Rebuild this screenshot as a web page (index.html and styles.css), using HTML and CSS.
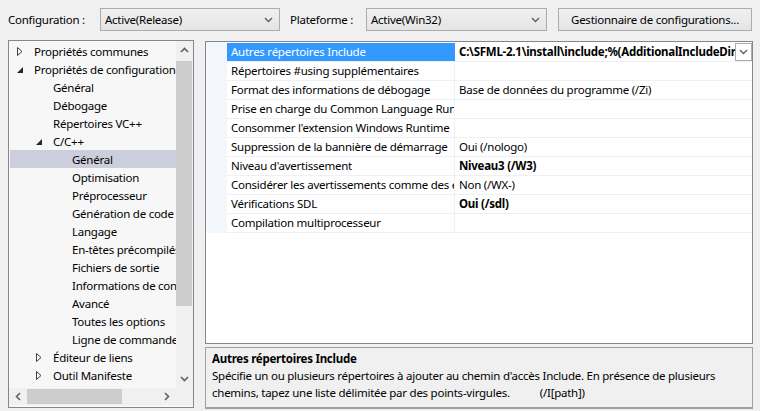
FILE: index.html
```html
<!DOCTYPE html>
<html lang="fr">
<head>
<meta charset="utf-8">
<link rel="stylesheet" href="styles.css">
</head>
<body>
<div class="toolbar">
  <span class="lbl lbl-config">Configuration :</span>
  <div class="combo combo-config"><span>Active(Release)</span><svg class="chev" width="9" height="6" viewBox="0 0 9 6"><path d="M1 1 L4.5 4.5 L8 1" fill="none" stroke="#606060" stroke-width="1.4"/></svg></div>
  <span class="lbl lbl-plat">Plateforme :</span>
  <div class="combo combo-plat"><span>Active(Win32)</span><svg class="chev" width="9" height="6" viewBox="0 0 9 6"><path d="M1 1 L4.5 4.5 L8 1" fill="none" stroke="#606060" stroke-width="1.4"/></svg></div>
  <button class="btn">Gestionnaire de configurations...</button>
</div>
<div class="main">
  <div class="tree">
    <div class="tree-content">
      <div class="node l0"><svg class="tw" width="8" height="9" viewBox="0 0 8 9"><path d="M1.5 0.5 L6 4.5 L1.5 8.5 Z" fill="none" stroke="#404040" stroke-width="1"/></svg>Propriétés communes</div>
      <div class="node l0"><svg class="tw" width="8" height="9" viewBox="0 0 8 9"><path d="M7 2 L7 8 L1 8 Z" fill="#262626"/></svg>Propriétés de configuration</div>
      <div class="node l1">Général</div>
      <div class="node l1">Débogage</div>
      <div class="node l1">Répertoires VC++</div>
      <div class="node l1"><svg class="tw" width="8" height="9" viewBox="0 0 8 9"><path d="M7 2 L7 8 L1 8 Z" fill="#262626"/></svg>C/C++</div>
      <div class="node l2 sel">Général</div>
      <div class="node l2">Optimisation</div>
      <div class="node l2">Préprocesseur</div>
      <div class="node l2">Génération de code</div>
      <div class="node l2">Langage</div>
      <div class="node l2">En-têtes précompilés</div>
      <div class="node l2">Fichiers de sortie</div>
      <div class="node l2">Informations de consultation</div>
      <div class="node l2">Avancé</div>
      <div class="node l2">Toutes les options</div>
      <div class="node l2">Ligne de commande</div>
      <div class="node l1"><svg class="tw" width="8" height="9" viewBox="0 0 8 9"><path d="M1.5 0.5 L6 4.5 L1.5 8.5 Z" fill="none" stroke="#404040" stroke-width="1"/></svg>Éditeur de liens</div>
      <div class="node l1"><svg class="tw" width="8" height="9" viewBox="0 0 8 9"><path d="M1.5 0.5 L6 4.5 L1.5 8.5 Z" fill="none" stroke="#404040" stroke-width="1"/></svg>Outil Manifeste</div>
    </div>
    <div class="vscroll">
      <svg class="sarrow" width="9" height="6" viewBox="0 0 9 6"><path d="M1 5 L4.5 1.5 L8 5" fill="none" stroke="#606060" stroke-width="1.6"/></svg>
      <div class="vtrack"><div class="vthumb"></div></div>
      <svg class="sarrow" width="9" height="6" viewBox="0 0 9 6"><path d="M1 1 L4.5 4.5 L8 1" fill="none" stroke="#606060" stroke-width="1.6"/></svg>
    </div>
    <div class="hscroll">
      <svg class="harrow" width="6" height="9" viewBox="0 0 6 9"><path d="M5 1 L1.5 4.5 L5 8" fill="none" stroke="#606060" stroke-width="1.6"/></svg>
      <div class="htrack"><div class="hthumb"></div></div>
      <svg class="harrow" width="6" height="9" viewBox="0 0 6 9"><path d="M1 1 L4.5 4.5 L1 8" fill="none" stroke="#606060" stroke-width="1.6"/></svg>
    </div>
    <div class="corner"></div>
  </div>
  <div class="right">
    <div class="grid">
      <div class="gutter"></div>
      <div class="rows">
        <div class="row"><div class="name selname">Autres répertoires Include</div><div class="val bold"><span class="vtext">C:\SFML-2.1\install\include;%(AdditionalIncludeDirectories)</span><span class="ddbtn"><svg width="9" height="6" viewBox="0 0 9 6"><path d="M1 1 L4.5 4.5 L8 1" fill="none" stroke="#606060" stroke-width="1.4"/></svg></span></div></div>
        <div class="row"><div class="name">Répertoires #using supplémentaires</div><div class="val"></div></div>
        <div class="row"><div class="name">Format des informations de débogage</div><div class="val">Base de données du programme (/Zi)</div></div>
        <div class="row"><div class="name">Prise en charge du Common Language Runtime</div><div class="val"></div></div>
        <div class="row"><div class="name">Consommer l'extension Windows Runtime</div><div class="val"></div></div>
        <div class="row"><div class="name">Suppression de la bannière de démarrage</div><div class="val">Oui (/nologo)</div></div>
        <div class="row"><div class="name">Niveau d'avertissement</div><div class="val bold">Niveau3 (/W3)</div></div>
        <div class="row"><div class="name">Considérer les avertissements comme des erreurs</div><div class="val">Non (/WX-)</div></div>
        <div class="row"><div class="name">Vérifications SDL</div><div class="val bold">Oui (/sdl)</div></div>
        <div class="row"><div class="name">Compilation multiprocesseur</div><div class="val"></div></div>
      </div>
    </div>
    <div class="desc">
      <div class="desc-title">Autres répertoires Include</div>
      <div class="desc-text">Spécifie un ou plusieurs répertoires à ajouter au chemin d'accès Include. En présence de plusieurs<br>chemins, tapez une liste délimitée par des points-virgules.<span class="switch">(/I[path])</span></div>
    </div>
  </div>
</div>
</body>
</html>
```
FILE: styles.css
```css
html, body {
  margin: 0;
  padding: 0;
}
body {
  width: 760px;
  height: 411px;
  overflow: hidden;
  background: #f0f0f0;
  font-family: "Noto Sans", "Open Sans", sans-serif;
  font-size: 11.5px;
  letter-spacing: -0.25px;
  color: #000;
}
.toolbar {
  display: flex;
  align-items: center;
  height: 23px;
  padding: 8px 0 0 8px;
}
.lbl {
  white-space: nowrap;
}
.lbl-config { width: 92px; }
.lbl-plat { width: 76px; margin-left: 10px; }
.combo {
  box-sizing: border-box;
  height: 23px;
  border: 1px solid #acacac;
  background: linear-gradient(#f0f0f0, #e5e5e5);
  display: flex;
  align-items: center;
  justify-content: space-between;
  padding: 0 6px 0 4px;
}
.combo-config { width: 180px; }
.combo-plat { width: 181px; }
.btn {
  box-sizing: border-box;
  margin-left: 11px;
  width: 194px;
  height: 23px;
  border: 1px solid #acacac;
  background: linear-gradient(#f0f0f0, #e5e5e5);
  font: inherit;
  letter-spacing: inherit;
  color: #000;
  padding: 0;
}
.main {
  display: flex;
  margin-top: 9px;
  padding-left: 8px;
}
.tree {
  box-sizing: border-box;
  width: 186px;
  height: 368px;
  border: 1px solid #828790;
  background: #f7f7f7;
  display: grid;
  grid-template-columns: 167px 17px;
  grid-template-rows: 347px 17px;
}
.tree-content {
  padding-top: 1px;
  overflow: hidden;
}
.node {
  height: 18px;
  line-height: 19px;
  white-space: nowrap;
  position: relative;
}
.tw {
  position: absolute;
  top: 5px;
}
.l0 { padding-left: 25px; }
.l0 .tw { left: 7px; }
.l1 { padding-left: 44px; }
.l1 .tw { left: 26px; }
.l2 { padding-left: 63px; }
.sel {
  background: #cccedb;
  margin-left: 1px;
  padding-left: 62px;
}
.vscroll {
  background: #f0f0f0;
  display: flex;
  flex-direction: column;
  align-items: center;
}
.sarrow {
  flex: none;
  margin: 6px 0;
}
.vtrack {
  flex: 1;
  width: 100%;
  padding: 1px 1px 0 0;
  box-sizing: border-box;
}
.vthumb {
  height: 245px;
  background: #cdcdcd;
  margin-top: 1px;
}
.hscroll {
  background: #f0f0f0;
  display: flex;
  align-items: center;
}
.harrow {
  flex: none;
  margin: 0 6px;
}
.htrack {
  flex: 1;
  height: 100%;
  padding: 1px 0;
  box-sizing: border-box;
}
.hthumb {
  width: 95px;
  height: 100%;
  background: #cdcdcd;
}
.corner {
  background: #f0f0f0;
}
.right {
  margin-left: 11px;
  width: 548px;
  display: flex;
  flex-direction: column;
}
.grid {
  box-sizing: border-box;
  margin-top: 1px;
  height: 303px;
  border: 1px solid #828790;
  background: #fff;
  display: flex;
  align-items: flex-start;
}
.gutter {
  flex: none;
  width: 21px;
  height: 191px;
  background: #f3f6fb;
}
.rows {
  flex: 1;
  min-width: 0;
  padding-top: 1px;
}
.row {
  display: flex;
  height: 19px;
  box-sizing: border-box;
  border-bottom: 1px solid #eef0f3;
  line-height: 18px;
}
.name {
  flex: none;
  width: 228px;
  box-sizing: border-box;
  padding-left: 4px;
  white-space: nowrap;
  overflow: hidden;
  border-right: 1px solid #eef0f3;
}
.selname {
  background: #3399ff;
  color: #fff;
  border-right-color: #3399ff;
}
.val {
  flex: 1;
  min-width: 0;
  padding-left: 4px;
  white-space: nowrap;
  overflow: hidden;
  display: flex;
}
.vtext {
  flex: 1;
  min-width: 0;
  overflow: hidden;
}
.bold { font-weight: bold; }
.ddbtn {
  flex: none;
  box-sizing: border-box;
  width: 17px;
  height: 18px;
  border: 1px solid #acacac;
  background: #fff;
  display: flex;
  align-items: center;
  justify-content: center;
}
.desc {
  box-sizing: border-box;
  margin-top: 3px;
  height: 62px;
  border: 1px solid #a0a0a0;
  border-bottom: 2px solid #a0a0a0;
  padding: 2px 6px 0 6px;
  line-height: 17px;
}
.desc-title { font-weight: bold; }
.switch { margin-left: 30px; }
```
